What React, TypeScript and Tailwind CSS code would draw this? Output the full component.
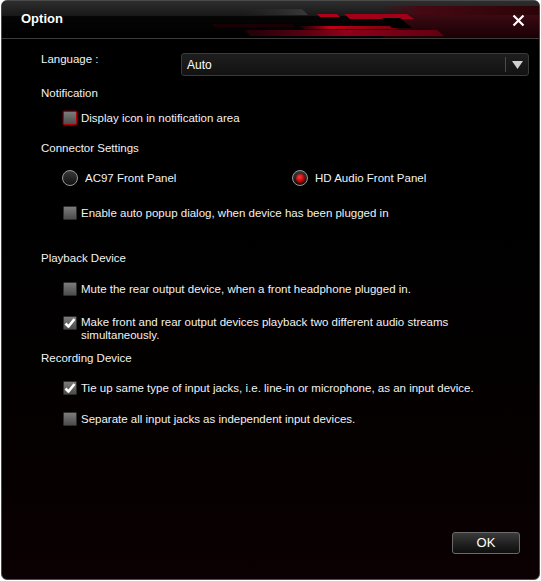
import React from "react";

const font = { fontFamily: '"Liberation Sans", Arial, sans-serif' };

function Checkbox({ checked = false, focus = false }: { checked?: boolean; focus?: boolean }) {
  return (
    <span
      className={
        "relative flex h-[14px] w-[14px] shrink-0 items-center justify-center rounded-[1px] border bg-gradient-to-b from-[#7c7c7c] to-[#4c4c4c] " +
        (focus ? "border-[#b00010] shadow-[0_0_2px_#c00010]" : "border-[#2e2e2e]")
      }
    >
      {checked && (
        <svg width="12" height="12" viewBox="0 0 12 12">
          <path d="M1.5 6.5 L4.5 9.5 L10.5 2" fill="none" stroke="#ffffff" strokeWidth="2.6" strokeLinejoin="round" />
        </svg>
      )}
    </span>
  );
}

function Radio({ checked = false }: { checked?: boolean }) {
  return (
    <span className="flex h-[16px] w-[16px] shrink-0 items-center justify-center rounded-full border border-[#9a9a9a] bg-gradient-to-b from-[#3a3a3a] to-[#111]">
      {checked && <span className="h-[9px] w-[9px] rounded-full bg-[radial-gradient(circle_at_40%_35%,#ff3a3a,#b00000_60%,#700000)]" />}
    </span>
  );
}

function CheckRow({ label, checked, focus, className = "" }: { label: React.ReactNode; checked?: boolean; focus?: boolean; className?: string }) {
  return (
    <div className={"flex items-start gap-[4px] pl-[22px] " + className}>
      <Checkbox checked={checked} focus={focus} />
      <span className="leading-[16px] -mt-[1px]">{label}</span>
    </div>
  );
}

function Banner() {
  return (
    <svg className="absolute inset-0" width="539" height="37" viewBox="0 0 539 37">
      <defs>
        <linearGradient id="top" x1="0" y1="0" x2="0" y2="1">
          <stop offset="0" stopColor="#2e2e2e" />
          <stop offset="0.4" stopColor="#181818" />
          <stop offset="0.42" stopColor="#050505" />
          <stop offset="1" stopColor="#000" />
        </linearGradient>
        <linearGradient id="redside" x1="0" y1="0" x2="1" y2="0">
          <stop offset="0" stopColor="#4a0612" stopOpacity="0" />
          <stop offset="0.25" stopColor="#4a0612" stopOpacity="0.9" />
          <stop offset="1" stopColor="#2a0408" />
        </linearGradient>
        <linearGradient id="redv" x1="0" y1="0" x2="0" y2="1">
          <stop offset="0" stopColor="#3a0a12" />
          <stop offset="1" stopColor="#1a0004" />
        </linearGradient>
        <linearGradient id="bar" x1="0" y1="0" x2="1" y2="0">
          <stop offset="0" stopColor="#6a0012" stopOpacity="0.2" />
          <stop offset="0.3" stopColor="#c00018" />
          <stop offset="1" stopColor="#7a0010" />
        </linearGradient>
        <linearGradient id="bar2" x1="0" y1="0" x2="1" y2="0">
          <stop offset="0" stopColor="#500010" stopOpacity="0.4" />
          <stop offset="0.5" stopColor="#90001a" />
          <stop offset="1" stopColor="#600010" />
        </linearGradient>
        <linearGradient id="grey" x1="0" y1="0" x2="1" y2="0">
          <stop offset="0" stopColor="#2a2a2a" stopOpacity="0" />
          <stop offset="1" stopColor="#3a3a3a" />
        </linearGradient>
      </defs>
      <rect width="539" height="37" fill="url(#top)" />
      <polygon points="380,37 539,37 539,14 400,14" fill="url(#redv)" />
      <polygon points="377,5 539,5 539,14 388,14" fill="url(#redside)" />
      <polygon points="240,8 300,8 306,14 246,14" fill="url(#grey)" />
      <polygon points="342,13 405,13 412,18 348,18" fill="#a00018" />
      <polygon points="315,13 335,13 338,16 318,16" fill="#b0001a" />
      <polygon points="210,23 290,23 293,26 213,26" fill="#1a0004" />
      <polygon points="297,25 390,25 396,28 302,28" fill="url(#bar)" />
      <polygon points="243,29 435,29 442,35 248,35" fill="url(#bar2)" />
      <polygon points="380,17 398,17 410,27 390,27" fill="#000" />
    </svg>
  );
}

export default function App() {
  return (
    <div className="h-[581px] w-[541px] bg-white" style={font}>
      <div className="ml-[1px] flex h-[580px] w-[539px] flex-col overflow-hidden rounded-[6px] border border-[#4a4a4a] bg-gradient-to-b from-[#000] via-[#020000] to-[#0b0002] text-[11.5px] text-[#f2f2f2]">
        {/* TITLE BAR */}
        <div className="relative h-[38px] shrink-0 border-b border-[#3c3c3c]">
          <Banner />
          <div className="relative flex h-full items-center justify-between pl-[19px] pr-[14px]">
            <span className="-mt-[2px] text-[13px] font-bold text-white">Option</span>
            <svg width="13" height="13" viewBox="0 0 13 13" className="mt-[1px]">
              <path d="M1.5 1.5 L11.5 11.5 M11.5 1.5 L1.5 11.5" stroke="#fff" strokeWidth="2.2" />
            </svg>
          </div>
        </div>

        {/* CONTENT */}
        <div className="flex flex-1 flex-col pl-[39px] pt-[12px]">
          <div className="flex items-start">
            <span className="w-[140px] leading-[16px]">Language :</span>
            <div className="mt-[2px] flex h-[23px] w-[348px] items-center rounded-[3px] border border-[#3a3a3a] bg-gradient-to-b from-[#1e1e1e] to-[#121212]">
              <span className="flex-1 pl-[5px] text-[12px] text-white">Auto</span>
              <span className="h-[15px] w-px bg-[#4a4a4a]" />
              <span className="flex w-[22px] justify-center">
                <svg width="11" height="8" viewBox="0 0 11 8">
                  <path d="M0 0 L11 0 L5.5 8 Z" fill="#cfcfcf" />
                </svg>
              </span>
            </div>
          </div>

          <div className="mt-[9px] leading-[16px]">Notification</div>
          <CheckRow className="mt-[10px]" focus label="Display icon in notification area" />

          <div className="mt-[14px] leading-[16px]">Connector Settings</div>
          <div className="mt-[14px] flex items-center pl-[21px]">
            <div className="flex w-[230px] items-center gap-[7px]">
              <Radio />
              <span className="leading-[16px]">AC97 Front Panel</span>
            </div>
            <div className="flex items-center gap-[7px]">
              <Radio checked />
              <span className="leading-[16px]">HD Audio Front Panel</span>
            </div>
          </div>
          <CheckRow className="mt-[20px]" label="Enable auto popup dialog, when device has been plugged in" />

          <div className="mt-[29px] leading-[16px]">Playback Device</div>
          <CheckRow className="mt-[16px]" label="Mute the rear output device, when a front headphone plugged in." />
          <div className="mt-[19px] flex items-start gap-[4px] pl-[22px]">
            <Checkbox checked />
            <span className="w-[390px] leading-[13px]">
              Make front and rear output devices playback two different audio streams simultaneously.
            </span>
          </div>

          <div className="mt-[8px] leading-[16px]">Recording Device</div>
          <CheckRow className="mt-[15px]" checked label="Tie up same type of input jacks, i.e. line-in or microphone, as an input device." />
          <CheckRow className="mt-[16px]" label="Separate all input jacks as independent input devices." />

          <div className="mt-auto flex justify-end pb-[25px] pr-[19px]">
            <button className="flex h-[22px] w-[68px] items-center justify-center rounded-[3px] border border-[#6a6a6a] bg-gradient-to-b from-[#3c3c3c] via-[#222] to-[#0e0e0e] text-[13px] text-white">
              OK
            </button>
          </div>
        </div>
      </div>
    </div>
  );
}
